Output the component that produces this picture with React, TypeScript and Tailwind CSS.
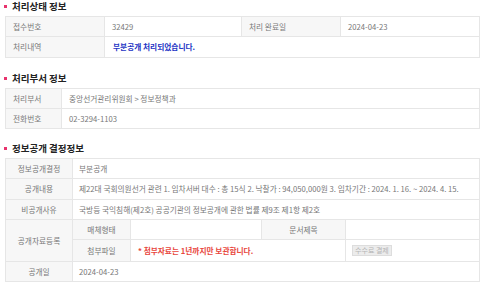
const font = { fontFamily: '"Noto Sans CJK KR", "Noto Sans", sans-serif' };

const Title = ({ text, className = '' }: { text: string; className?: string }) => (
    <div className={`flex items-center h-[11px] mb-1 ${className}`}>
        <span className="w-[3px] h-[3px] bg-[#e8336d] ml-[4px] mr-[5px]" />
        <span className="text-[9.5px] font-bold text-[#222] leading-[11px]">{text}</span>
    </div>
);

const cell = 'h-[20px] flex items-center border-r border-b border-[#e6e6e6] text-[7.7px] text-[#777] leading-none';
const label = `${cell} bg-[#f7f7f7]`;

const App = () => {
    return (
        <div className="w-[482px] h-[284px] bg-white overflow-hidden pt-[1px]" style={font}>
            {/* 처리상태 정보 */}
            <Title text="처리상태 정보" />
            <div className="ml-[5px] w-[475px] grid grid-cols-[99px_137px_99px_1fr] border-l border-t border-[#e6e6e6]">
                <div className={`${label} px-[7px]`}>접수번호</div>
                <div className={`${cell} px-[7px]`}>32429</div>
                <div className={`${label} px-[7px]`}>처리 완료일</div>
                <div className={`${cell} px-[7px]`}>2024-04-23</div>
                <div className={`${label} px-[7px] h-[21px]`}>처리내역</div>
                <div className={`${cell} col-span-3 px-[8px] h-[21px] font-bold text-[#2233c4]`}>부분공개 처리되었습니다.</div>
            </div>

            {/* 처리부서 정보 */}
            <Title text="처리부서 정보" className="mt-[15px]" />
            <div className="ml-[5px] w-[475px] grid grid-cols-[56px_1fr] border-l border-t border-[#e6e6e6]">
                <div className={`${label} px-[7px]`}>처리부서</div>
                <div className={`${cell} px-[7px]`}>중앙선거관리위원회 &gt; 정보정책과</div>
                <div className={`${label} px-[7px]`}>전화번호</div>
                <div className={`${cell} px-[7px]`}>02-3294-1103</div>
            </div>

            {/* 정보공개 결정정보 */}
            <Title text="정보공개 결정정보" className="mt-[14px]" />
            <div className="ml-[5px] w-[475px] grid grid-cols-[67px_58px_131px_84px_1fr] border-l border-t border-[#e6e6e6]">
                <div className={`${label} justify-center`}>정보공개결정</div>
                <div className={`${cell} col-span-4 px-[6px]`}>부분공개</div>

                <div className={`${label} justify-center h-[21px]`}>공개내용</div>
                <div className={`${cell} col-span-4 px-[6px] h-[21px] whitespace-nowrap`}>
                    제22대 국회의원선거 관련 1. 임차서버 대수 : 총 15식 2. 낙찰가 : 94,050,000원 3. 임차기간 : 2024. 1. 16. ~ 2024. 4. 15.
                </div>

                <div className={`${label} justify-center`}>비공개사유</div>
                <div className={`${cell} col-span-4 px-[6px] whitespace-nowrap`}>
                    국방등 국익침해(제2호) 공공기관의 정보공개에 관한 법률 제9조 제1항 제2호
                </div>

                <div className={`${label} justify-center row-span-2 h-[42px]`}>공개자료등록</div>
                <div className={`${label} justify-center`}>매체형태</div>
                <div className={cell} />
                <div className={`${label} justify-center`}>문서제목</div>
                <div className={cell} />

                <div className={`${label} justify-center h-[22px]`}>첨부파일</div>
                <div className={`${cell} col-span-2 px-[7px] h-[22px] font-bold text-[#e8463c] whitespace-nowrap`}>
                    * 첨부자료는 1년까지만 보관합니다.
                </div>
                <div className={`${cell} h-[22px] px-[6px]`}>
                    <button
                        disabled
                        className="h-[11px] px-[2px] bg-[#ececec] border border-[#dddddd] text-[7px] text-[#b5b5b5] leading-none"
                    >
                        수수료 결제
                    </button>
                </div>

                <div className={`${label} justify-center`}>공개일</div>
                <div className={`${cell} col-span-4 px-[6px]`}>2024-04-23</div>
            </div>
        </div>
    );
};

export default App;
